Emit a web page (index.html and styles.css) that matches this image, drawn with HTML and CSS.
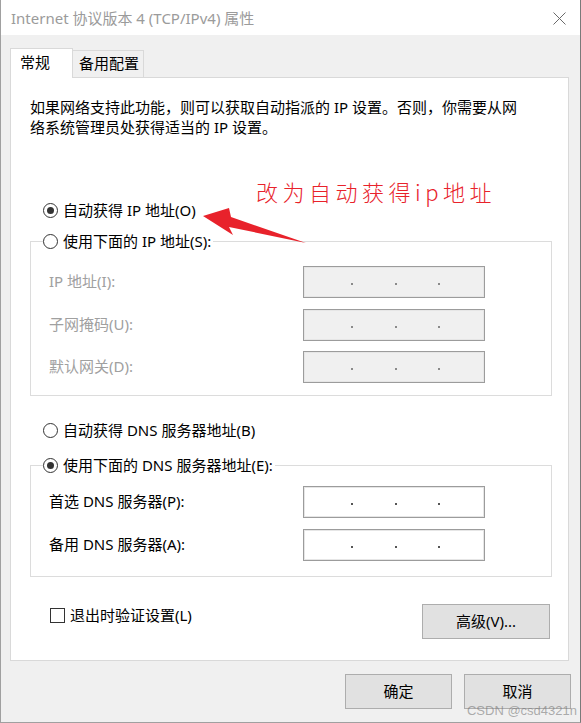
FILE: index.html
```html
<!DOCTYPE html>
<html lang="zh-CN">
<head>
    <meta charset="UTF-8">
    <meta name="viewport" content="width=device-width, initial-scale=1.0">
    <title>Internet 协议版本 4 (TCP/IPv4) 属性</title>
    <link rel="stylesheet" href="styles.css">
</head>
<body>
    <div class="window">
        <div class="titlebar">
            <span class="title">Internet 协议版本 4 (TCP/IPv4) 属性</span>
            <svg class="close" width="13" height="13" viewBox="0 0 13 13">
                <path d="M0.5 0.5 L12.5 12.5 M12.5 0.5 L0.5 12.5" stroke="#6a6a6a" stroke-width="1" fill="none"/>
            </svg>
        </div>

        <div class="content">
            <div class="tabs">
                <div class="tab active">常规</div>
                <div class="tab">备用配置</div>
            </div>

            <div class="panel">
                <p class="desc">如果网络支持此功能，则可以获取自动指派的 IP 设置。否则，你需要从网<br>络系统管理员处获得适当的 IP 设置。</p>

                <div class="radio first"><span class="circle checked"></span><span class="text">自动获得 IP 地址(O)</span></div>

                <fieldset class="group ip-group">
                    <legend><div class="radio"><span class="circle"></span><span class="text">使用下面的 IP 地址(S):</span></div></legend>
                    <div class="row disabled">
                        <span class="label">IP 地址(I):</span>
                        <div class="ip-box"><i></i><i></i><i></i></div>
                    </div>
                    <div class="row disabled">
                        <span class="label">子网掩码(U):</span>
                        <div class="ip-box"><i></i><i></i><i></i></div>
                    </div>
                    <div class="row disabled">
                        <span class="label">默认网关(D):</span>
                        <div class="ip-box"><i></i><i></i><i></i></div>
                    </div>
                </fieldset>

                <div class="radio dns-auto"><span class="circle"></span><span class="text">自动获得 DNS 服务器地址(B)</span></div>

                <fieldset class="group dns-group">
                    <legend><div class="radio"><span class="circle checked"></span><span class="text">使用下面的 DNS 服务器地址(E):</span></div></legend>
                    <div class="row">
                        <span class="label">首选 DNS 服务器(P):</span>
                        <div class="ip-box"><i></i><i></i><i></i></div>
                    </div>
                    <div class="row">
                        <span class="label">备用 DNS 服务器(A):</span>
                        <div class="ip-box"><i></i><i></i><i></i></div>
                    </div>
                </fieldset>

                <div class="bottom-row">
                    <div class="check"><span class="box"></span><span class="text">退出时验证设置(L)</span></div>
                    <div class="button advanced">高级(V)...</div>
                </div>
            </div>

            <div class="footer">
                <div class="button">确定</div>
                <div class="button">取消</div>
            </div>
        </div>

        <!-- 标注 -->
        <div class="note">改为自动获得ip地址</div>
        <svg class="arrow" width="581" height="723" viewBox="0 0 581 723">
            <polygon points="203,216 229,208 231,217 306,243 229,227 233,235" fill="#e8222b"/>
        </svg>

        <div class="watermark">CSDN @csd4321n</div>
    </div>
</body>
</html>
```

FILE: styles.css
```css
/* Janela */
body {
    margin: 0;
    background-color: #ffffff;
    font-family: "Noto Sans", "Noto Sans CJK SC", sans-serif;
    font-size: 15px;
    color: #000;
}

.window {
    position: relative;
    width: 581px;
    height: 723px;
    box-sizing: border-box;
    background-color: #f0f0f0;
    border-left: 1px solid #a0a0a0;
    border-right: 1px solid #7a7a7a;
    border-bottom: 1px solid #a0a0a0;
}

.titlebar {
    height: 35px;
    background-color: #fff;
    display: flex;
    align-items: center;
    justify-content: space-between;
    padding: 0 14px 0 10px;
}

.title {
    color: #9b9b9b;
    font-size: 15px;
    padding-bottom: 1px;
}

.close {
    margin-top: 1px;
}

.content {
    padding: 13px 9px 0 9px;
}

/* Abas */
.tabs {
    display: flex;
    align-items: flex-end;
    height: 29px;
}

.tab {
    box-sizing: border-box;
    height: 27px;
    width: 71px;
    padding: 0 0 3px 6px;
    display: flex;
    align-items: center;
    border: 1px solid #d9d9d9;
    border-left: none;
    border-bottom: none;
    background-color: #f0f0f0;
}

.tab.active {
    position: relative;
    z-index: 1;
    width: 63px;
    height: 30px;
    margin-bottom: -1px;
    padding: 0 0 4px 9px;
    border-left: 1px solid #d9d9d9;
    background-color: #fff;
}

.panel {
    box-sizing: border-box;
    width: 559px;
    height: 584px;
    background-color: #fff;
    border: 1px solid #d9d9d9;
    padding: 19px 0 0 19px;
}

.desc {
    margin: 0;
    line-height: 20px;
}

/* Radios */
.radio {
    display: flex;
    align-items: center;
    height: 20px;
    white-space: nowrap;
}

.radio .text,
.check .text {
    padding-bottom: 2px;
}

.radio.first {
    margin: 63px 0 0 13px;
}

.radio.dns-auto {
    margin: 24px 0 0 13px;
}

.circle {
    box-sizing: border-box;
    width: 15px;
    height: 15px;
    border: 1px solid #333;
    border-radius: 50%;
    margin-right: 5px;
    display: flex;
    align-items: center;
    justify-content: center;
}

.circle.checked::after {
    content: "";
    width: 7px;
    height: 7px;
    border-radius: 50%;
    background-color: #333;
}

/* Grupos */
.group {
    box-sizing: border-box;
    width: 522px;
    margin: 0;
    border: 1px solid #dcdcdc;
    min-width: 0;
}

.group legend {
    padding: 0 2px 0 0;
}

.ip-group {
    margin-top: 11px;
    padding: 15px 0 12px 12px;
}

.dns-group {
    margin-top: 15px;
    padding: 11px 0 15px 12px;
}

.row {
    display: flex;
    align-items: center;
    height: 32px;
    margin-left: 6px;
}

.ip-group .row + .row {
    margin-top: 10.5px;
}

.dns-group .row + .row {
    margin-top: 11px;
}

.label {
    width: 254px;
    white-space: nowrap;
    padding-bottom: 3px;
}

.row.disabled .label {
    color: #a0a0a0;
}

.ip-box {
    box-sizing: border-box;
    width: 182px;
    height: 32px;
    border: 1px solid #9c9c9c;
    box-shadow: inset 0 0 0 1px #e6e6e6;
    background-color: #fff;
    display: flex;
    align-items: center;
    gap: 41.5px;
    padding: 4px 0 0 47px;
}

.row.disabled .ip-box {
    background-color: #f0f0f0;
}

.ip-box i {
    width: 2px;
    height: 2px;
    background-color: #555;
}

.row.disabled .ip-box i {
    background-color: #8a8a8a;
}

/* Rodape do painel */
.bottom-row {
    display: flex;
    justify-content: space-between;
    align-items: flex-start;
    margin-top: 27px;
    padding: 0 18px 0 20px;
}

.check {
    display: flex;
    align-items: center;
    height: 20px;
    margin-top: 1px;
}

.check .box {
    box-sizing: border-box;
    width: 15px;
    height: 15px;
    border: 1px solid #333;
    margin-right: 5px;
}

.button {
    box-sizing: border-box;
    width: 107px;
    height: 35px;
    display: flex;
    align-items: center;
    justify-content: center;
    padding-bottom: 2px;
    background-color: #e1e1e1;
    border: 1px solid #adadad;
}

.button.advanced {
    width: 128px;
}

.footer {
    display: flex;
    justify-content: flex-end;
    gap: 12px;
    margin-top: 13px;
}

/* Anotacao vermelha */
.note {
    position: absolute;
    left: 255px;
    top: 177px;
    font-family: "Noto Sans CJK SC", sans-serif;
    font-weight: 300;
    font-size: 22px;
    line-height: 28px;
    letter-spacing: 4.5px;
    color: #e8222b;
}

.arrow {
    position: absolute;
    left: -1px;
    top: 0;
    pointer-events: none;
}

.watermark {
    position: absolute;
    right: 3px;
    bottom: 4px;
    font-family: "Liberation Sans", sans-serif;
    font-size: 13px;
    line-height: 14px;
    color: rgba(110, 110, 110, 0.55);
}
```
